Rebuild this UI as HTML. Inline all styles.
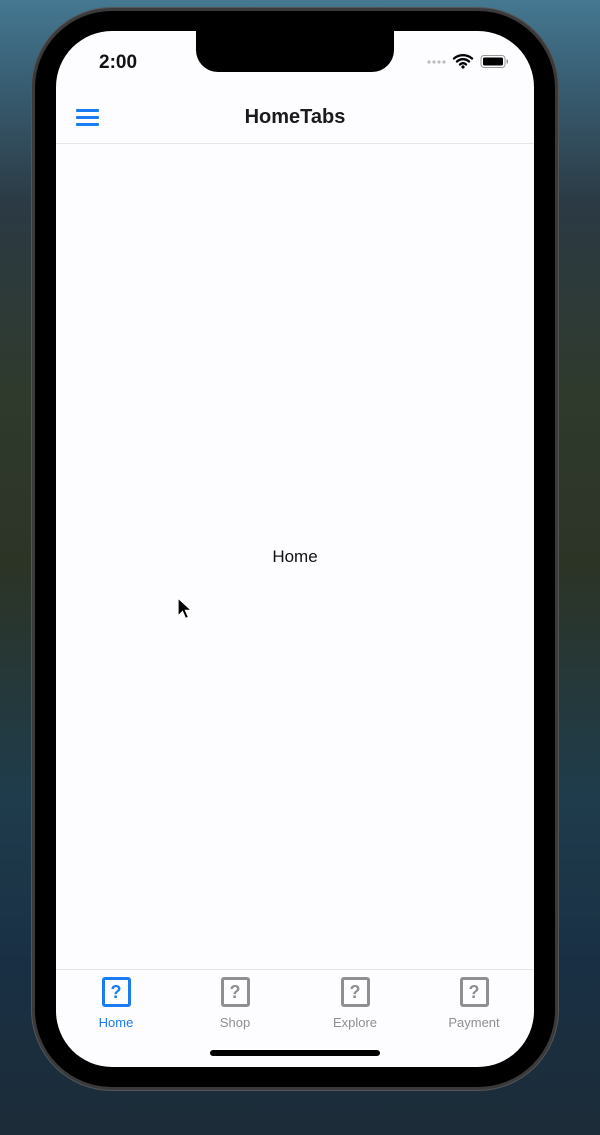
<!DOCTYPE html>
<html><head><meta charset="utf-8"><style>
*{margin:0;padding:0;box-sizing:border-box}
html,body{width:600px;height:1135px;overflow:hidden}
body{position:relative;font-family:"Liberation Sans",sans-serif;
background:linear-gradient(180deg,#457891 0%,#3a6278 6%,#2b3a44 18%,#2f3a2c 35%,#2c3426 50%,#1f3c4c 70%,#193044 85%,#1c2c38 100%);}
.phone{position:absolute;left:32px;top:8px;width:526px;height:1082px;background:#000;border-radius:80px;border:3px solid #3a3a3c;box-shadow:0 0 0 1px #555}
.screen{position:absolute;left:56px;top:31px;width:478px;height:1036px;background:#fdfcff;border-radius:56px;overflow:hidden}
.notch{position:absolute;left:140px;top:0;width:198px;height:41px;background:#000;border-radius:0 0 22px 22px}
.time{position:absolute;left:43px;top:21px;font-size:19px;font-weight:bold;color:#111}
.hdr{position:absolute;left:0;top:112px;width:478px;height:1px;background:#e6e6ea}
.title{position:absolute;left:0;width:478px;top:75px;text-align:center;font-size:20px;font-weight:bold;color:#1a1a1a}
.menu{position:absolute;left:20px;top:78px;width:23px}
.menu div{height:3px;background:#1a7cf2;margin-bottom:4px;border-radius:1px}
.home{position:absolute;left:0;width:478px;top:516px;text-align:center;font-size:17px;color:#111}
.tabline{position:absolute;left:0;top:938px;width:478px;height:1px;background:#e6e6ea}
.tab{position:absolute;top:946px;width:120px;text-align:center;font-size:13px;color:#8e8e93}
.ic{width:29px;height:30px;margin:0 auto 8px;border:3px solid #8e8e93;border-radius:3px;font-weight:bold;font-size:18px;line-height:24px;color:#8e8e93}
.act{color:#1a7cf2}.act .ic{border-color:#1a7cf2;color:#1a7cf2}
.bar{position:absolute;left:154px;top:1019px;width:170px;height:6px;background:#000;border-radius:3px}
</style></head><body>
<div class="phone"></div>
<div class="screen">
<div class="notch"></div>
<div class="time">2:00</div>
<svg style="position:absolute;left:370px;top:22px" width="92" height="16" viewBox="0 0 92 16">
<g fill="#bbb"><circle cx="3" cy="9" r="1.6"/><circle cx="8" cy="9" r="1.6"/><circle cx="13" cy="9" r="1.6"/><circle cx="18" cy="9" r="1.6"/></g>
<path d="M28 5.5a14 14 0 0 1 18 0M31 8.5a9 9 0 0 1 12 0M34 11.5a4 4 0 0 1 6 0" stroke="#000" stroke-width="2.4" fill="none" stroke-linecap="round"/>
<circle cx="37" cy="14" r="1.6" fill="#000"/>
<rect x="55" y="2.5" width="24" height="12" rx="3" fill="none" stroke="#999" stroke-width="1"/>
<rect x="57" y="4.5" width="20" height="8" rx="1.5" fill="#000"/>
<rect x="80.5" y="6.5" width="1.5" height="4" fill="#999"/>
</svg>
<div class="menu"><div></div><div></div><div style="margin:0"></div></div>
<div class="title">HomeTabs</div>
<div class="hdr"></div>
<div class="home">Home</div>
<div class="tabline"></div>
<div class="tab act" style="left:0"><div class="ic">?</div>Home</div>
<div class="tab" style="left:119px"><div class="ic">?</div>Shop</div>
<div class="tab" style="left:239px"><div class="ic">?</div>Explore</div>
<div class="tab" style="left:358px"><div class="ic">?</div>Payment</div>
<div class="bar"></div>
</div>
<svg style="position:absolute;left:177px;top:597px" width="16" height="24" viewBox="0 0 16 24"><path d="M1 1v18l4.5-4.5 3 7 3-1.3-3-6.8h6z" fill="#000" stroke="#fff" stroke-width="1.2"/></svg>
</body></html>
